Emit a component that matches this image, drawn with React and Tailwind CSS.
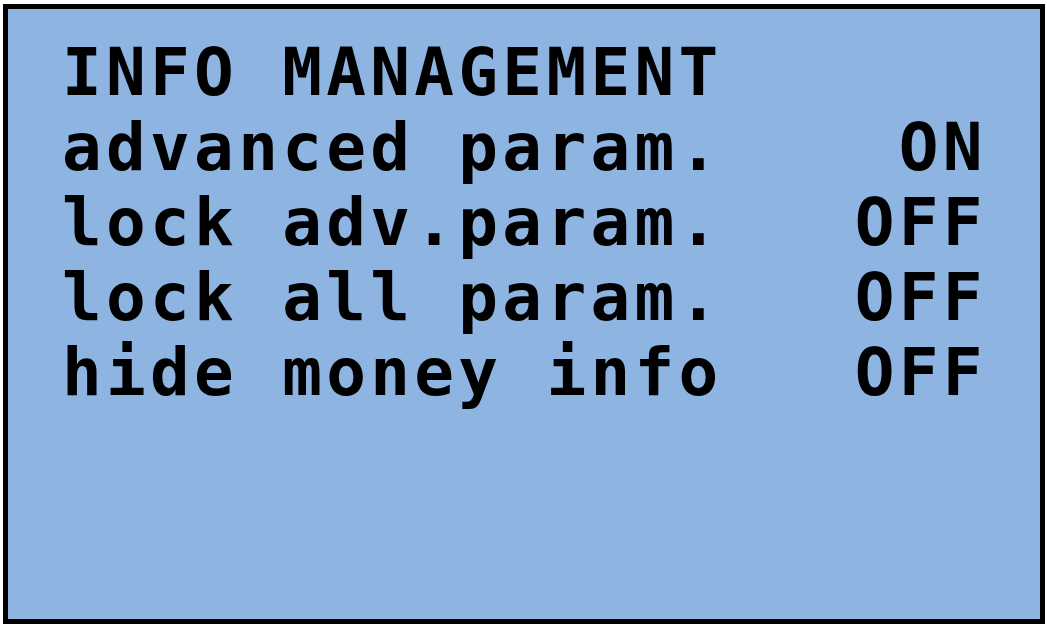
const rows = [
  "INFO MANAGEMENT",
  "advanced param.    ON",
  "lock adv.param.   OFF",
  "lock all param.   OFF",
  "hide money info   OFF",
];

export default function App() {
  return (
    <div className="w-[1047px] h-[625px] bg-white pt-[4px] pl-[3px]">
      <div className="w-[1042px] h-[620px] border-[5px] border-black bg-[#8eb4e2] pt-[26px] pl-[54px]">
        {rows.map((row) => (
          <div
            key={row}
            className="whitespace-pre text-black text-[66px] leading-[75px] tracking-[4.3px] font-bold font-['DejaVu_Sans_Mono',monospace]"
          >
            {row}
          </div>
        ))}
      </div>
    </div>
  );
}
